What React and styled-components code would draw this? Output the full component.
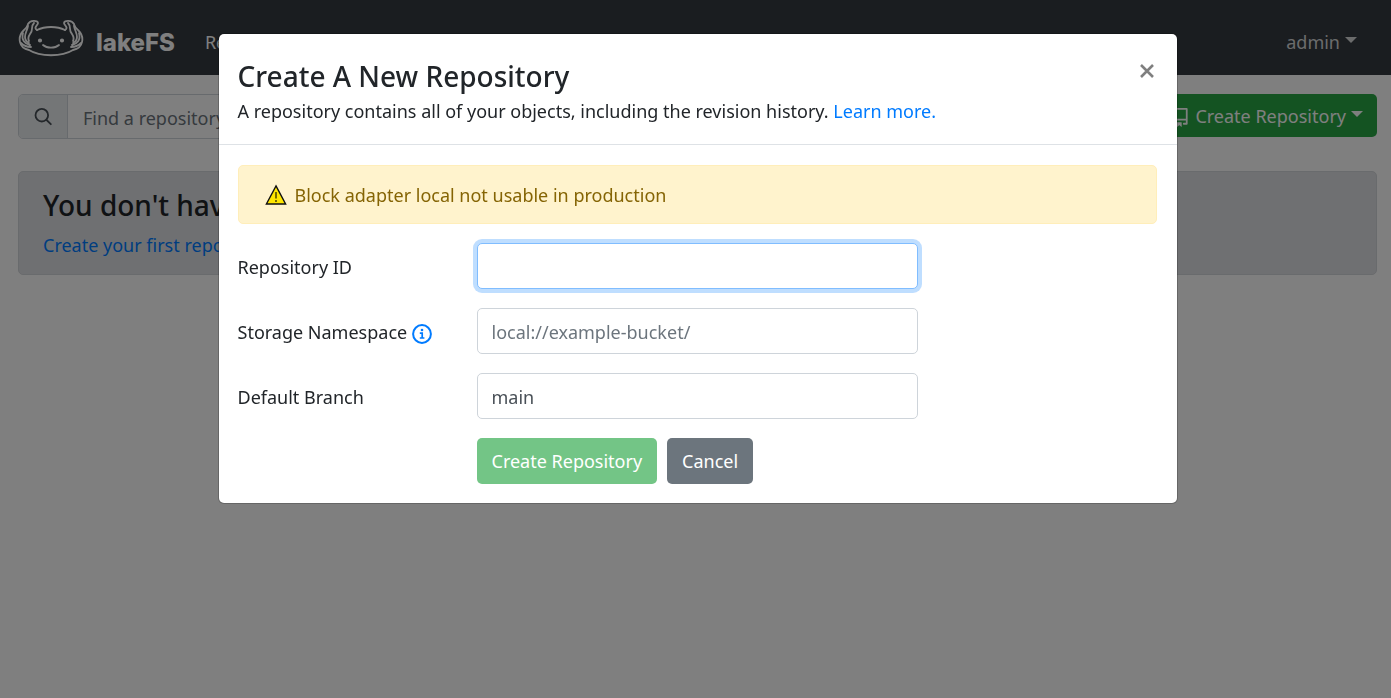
import React from "react";
import styled, { createGlobalStyle, css } from "styled-components";

const GlobalStyle = createGlobalStyle`
  *, *::before, *::after { box-sizing: border-box; }
  body {
    margin: 0;
    background: #fff;
    color: #212529;
    font-family: "Noto Sans", "Open Sans", sans-serif;
    font-size: 18px;
    line-height: 28px;
  }
  a { color: #007bff; text-decoration: none; }
  button, input { font: inherit; }
`;

const Navbar = styled.nav`
  display: flex;
  align-items: center;
  min-height: 75px;
  padding: 8px 34px 0 18px;
  background: #343a40;
`;

const Brand = styled.a`
  display: flex;
  align-items: center;
  gap: 12px;
  margin-right: 30px;
  color: #fff;
  font: 800 24px/32px Inter, sans-serif;

  svg { display: block; margin-top: -8px; }
`;

const BrandName = styled.span`
  padding-top: 2px;
`;

const NavLink = styled.a`
  color: #fff;
`;

const navButton = css`
  display: flex;
  align-items: center;
  gap: 5px;
  border: 0;
  cursor: pointer;
`;

const UserMenu = styled.button`
  ${navButton}
  margin-left: auto;
  padding: 0;
  background: none;
  color: #d6d8d9;
`;

const Caret = styled.span`
  margin-top: -3px;
  border: 6px solid transparent;
  border-top-color: currentColor;
  border-bottom: 0;
`;

const Page = styled.main`
  padding: 19px 14px 0 18px;
`;

const Toolbar = styled.div`
  display: flex;
  justify-content: space-between;
  align-items: flex-start;
`;

const SearchGroup = styled.form`
  display: flex;
  width: 50%;
  height: 45px;
  border: 1px solid #ced4da;
  border-radius: 5px;
  overflow: hidden;
`;

const SearchLabel = styled.label`
  display: flex;
  align-items: center;
  justify-content: center;
  width: 49px;
  border-right: 1px solid #ced4da;
  background: #e9ecef;
  color: #495057;
`;

const SearchInput = styled.input`
  flex: 1;
  padding: 2px 15px 0;
  border: 0;
  background: #fff;

  &::placeholder { color: #6c757d; opacity: 1; }
`;

const CreateMenu = styled.button`
  ${navButton}
  height: 43px;
  padding: 0 14px;
  border-radius: 5px;
  background: #28a745;
  color: #fff;

  svg { margin-top: 4px; }
`;

const EmptyCard = styled.section`
  margin-top: 32px;
  padding: 15px 24px;
  border: 1px solid #d3d6da;
  border-radius: 5px;
  background: #dfe1e5;

  p { margin: 8px 0 0; }
`;

const Title = styled.h2`
  margin: 0;
  font-size: 28px;
  line-height: 36px;
  font-weight: 500;
`;

const Backdrop = styled.div`
  position: fixed;
  inset: 0;
  overflow: auto;
  padding: 34px 14px 34px 18px;
  background: rgba(0, 0, 0, 0.5);
`;

const Dialog = styled.div`
  max-width: 958px;
  margin: 0 auto;
  border-radius: 5px;
  background: #fff;
  box-shadow: 0 0 0 1px rgba(0, 0, 0, 0.2);
`;

const DialogHeader = styled.header`
  display: flex;
  justify-content: space-between;
  align-items: flex-start;
  padding: 24px 19px 19px;
  border-bottom: 1px solid #dee2e6;

  p { margin: 3px 0 0; }
`;

const CloseButton = styled.button`
  display: flex;
  padding: 6px 4px;
  border: 0;
  background: none;
  color: #7f7f7f;
  cursor: pointer;
`;

const DialogBody = styled.div`
  padding: 20px 20px 19px 19px;
`;

const Alert = styled.div`
  display: flex;
  align-items: center;
  gap: 8px;
  min-height: 59px;
  margin-bottom: 19px;
  padding: 0 26px;
  border: 1px solid #ffeeba;
  border-radius: 5px;
  background: #fff3cd;
  color: #856404;
`;

const Form = styled.form`
  display: flex;
  flex-direction: column;
  gap: 19px;
`;

const Row = styled.div`
  display: grid;
  grid-template-columns: 239px minmax(0, 441px);
  align-items: center;
`;

const Label = styled.label`
  display: flex;
  align-items: center;
  gap: 5px;
  padding-top: 2px;

  svg { color: #007bff; margin-top: 4px; }
`;

const TextInput = styled.input`
  width: 100%;
  height: 46px;
  padding: 2px 14px 0;
  border: 1px solid #ced4da;
  border-radius: 5px;
  color: #495057;
  background: #fff;

  &::placeholder { color: #6c757d; opacity: 1; }
  &:focus {
    outline: 0;
    border-color: #80bdff;
    box-shadow: 0 0 0 4px rgba(0, 123, 255, 0.25);
  }
`;

const Actions = styled.div`
  display: flex;
  grid-column: 2;
  gap: 10px;
`;

const Button = styled.button`
  height: 46px;
  padding: 0 15px;
  border: 0;
  border-radius: 5px;
  background: ${(p) => (p.$primary ? "#28a745" : "#6c757d")};
  color: #fff;
  cursor: pointer;

  &:disabled { opacity: 0.65; cursor: default; }
`;

const Axolotl = () => (
  <svg width="66" height="38" viewBox="0 0 66 38" fill="none" stroke="#fff" strokeWidth="1.8" strokeLinecap="round" strokeLinejoin="round" aria-hidden="true">
    <path d="M19 11C27 7 39 7 47 11" />
    <path d="M19 11C15 9 20 6 20 4C20 1 12 1 10 5C9 8 9 9 6 11C2 15 1 19 2 23C3 28 6 30 11 31C22 38 44 38 55 31C60 30 63 28 64 23C65 19 64 15 60 11C57 9 57 8 56 5C54 1 46 1 46 4C46 6 51 9 47 11" />
    <path d="M16 4C12 8 16 11 12 15C10 18 10 20 11 22M10 7C9 12 7 14 7 18C7 21 9 23 11 24M5 14C3 21 7 25 12 26M3 24C6 27 9 28 13 28" />
    <path d="M50 4C54 8 50 11 54 15C56 18 56 20 55 22M56 7C57 12 59 14 59 18C59 21 57 23 55 24M61 14C63 21 59 25 54 26M63 24C60 27 57 28 53 28" />
    <path d="M25 26C29 29.5 37 29.5 41 26" />
    <circle cx="22" cy="21.5" r="1.2" fill="#fff" />
    <circle cx="44" cy="21.5" r="1.2" fill="#fff" />
  </svg>
);

const SearchIcon = () => (
  <svg width="18" height="18" viewBox="0 0 18 18" fill="none" stroke="currentColor" strokeWidth="1.8" strokeLinecap="round" aria-hidden="true">
    <circle cx="7.8" cy="7.2" r="6.3" />
    <path d="M12.6 12L16.8 16.2" />
  </svg>
);

const RepoIcon = () => (
  <svg width="19" height="19" viewBox="0 0 16 16" fill="currentColor" fillRule="evenodd" aria-hidden="true">
    <path d="M2 2.5A2.5 2.5 0 014.5 0h8.75a.75.75 0 01.75.75v12.5a.75.75 0 01-.75.75h-2.5a.75.75 0 110-1.5h1.75v-2h-8a1 1 0 00-.714 1.7.75.75 0 01-1.072 1.05A2.495 2.495 0 012 11.5v-9zm10.5-1V9h-8c-.356 0-.694.074-1 .208V2.5a1 1 0 011-1h8zM5 12.25v3.25a.25.25 0 00.4.2l1.45-1.087a.25.25 0 01.3 0L8.6 15.7a.25.25 0 00.4-.2v-3.25a.25.25 0 00-.25-.25h-3.5a.25.25 0 00-.25.25z" />
  </svg>
);

const InfoIcon = () => (
  <svg width="20" height="20" viewBox="0 0 20 20" fill="none" stroke="currentColor" strokeWidth="2" aria-hidden="true">
    <circle cx="10" cy="10" r="8.9" />
    <path d="M7.8 9.2H10.2V13.8M7.8 14H12.4" strokeWidth="1.7" />
    <circle cx="10" cy="6" r="1.3" fill="currentColor" stroke="none" />
  </svg>
);

const WarningIcon = () => (
  <svg width="22" height="21" viewBox="0 0 22 21" aria-hidden="true">
    <path d="M11 1.9L20.6 20H1.4Z" fill="#ffe600" stroke="#111" strokeWidth="1.4" />
    <path d="M11 8V14.5M11 16V18" stroke="#4d4500" strokeWidth="1.5" />
  </svg>
);

const CloseIcon = () => (
  <svg width="14" height="14" viewBox="0 0 14 14" stroke="currentColor" strokeWidth="2.6" aria-hidden="true">
    <path d="M1 1L13 13M13 1L1 13" />
  </svg>
);

export default function App() {
  return (
    <>
      <GlobalStyle />
      <Navbar>
        <Brand href="#"><Axolotl /><BrandName>lakeFS</BrandName></Brand>
        <NavLink href="#">Repositories</NavLink>
        <UserMenu type="button">admin<Caret /></UserMenu>
      </Navbar>
      <Page>
        <Toolbar>
          <SearchGroup>
            <SearchLabel htmlFor="search" aria-label="Find a repository"><SearchIcon /></SearchLabel>
            <SearchInput id="search" placeholder="Find a repository..." />
          </SearchGroup>
          <CreateMenu type="button"><RepoIcon />Create Repository<Caret /></CreateMenu>
        </Toolbar>
        <EmptyCard>
          <Title>You don't have any repositories yet.</Title>
          <p><a href="#">Create your first repository</a></p>
        </EmptyCard>
      </Page>
      <Backdrop>
        <Dialog role="dialog" aria-modal="true" aria-labelledby="dialog-title">
          <DialogHeader>
            <div>
              <Title id="dialog-title">Create A New Repository</Title>
              <p>A repository contains all of your objects, including the revision history. <a href="#">Learn more.</a></p>
            </div>
            <CloseButton type="button" aria-label="Close"><CloseIcon /></CloseButton>
          </DialogHeader>
          <DialogBody>
            <Alert role="alert"><WarningIcon />Block adapter local not usable in production</Alert>
            <Form>
              <Row>
                <Label htmlFor="repo-id">Repository ID</Label>
                <TextInput id="repo-id" autoFocus />
              </Row>
              <Row>
                <Label htmlFor="namespace">Storage Namespace<InfoIcon /></Label>
                <TextInput id="namespace" placeholder="local://example-bucket/" />
              </Row>
              <Row>
                <Label htmlFor="branch">Default Branch</Label>
                <TextInput id="branch" defaultValue="main" />
              </Row>
              <Row>
                <Actions>
                  <Button type="submit" $primary disabled>Create Repository</Button>
                  <Button type="button">Cancel</Button>
                </Actions>
              </Row>
            </Form>
          </DialogBody>
        </Dialog>
      </Backdrop>
    </>
  );
}
